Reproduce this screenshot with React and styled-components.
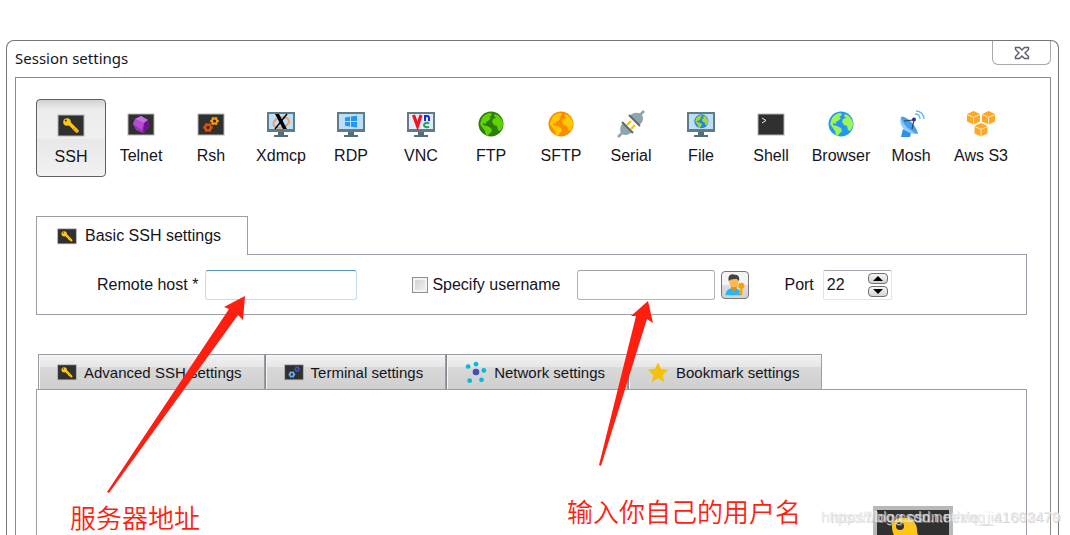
import React from 'react'
import styled, { createGlobalStyle } from 'styled-components'

const line = '#9c9ca6'

const GlobalStyle = createGlobalStyle`
  * {
    box-sizing: border-box;
  }
  body {
    margin: 0;
    background-color: #ffffff;
    color: #14141c;
    font-family: 'Liberation Sans', Arial, sans-serif;
    font-size: 16px;
  }
  button,
  input {
    font: inherit;
    color: inherit;
  }
  svg {
    display: block;
    flex: none;
  }
`

const Page = styled.div`
  position: relative;
  height: 100vh;
  overflow: hidden;
  display: flex;
  flex-direction: column;
  padding: 40px 11px 0 6px;
`

const Window = styled.main`
  flex: 1;
  display: flex;
  flex-direction: column;
  border: 1px solid #77777a;
  border-bottom: none;
  border-radius: 8px 8px 0 0;
`

const TitleBar = styled.header`
  height: 36px;
  display: flex;
  justify-content: space-between;
  align-items: flex-start;
  padding: 0 7px 0 8px;
`

const Title = styled.h1`
  margin: 0;
  font-family: 'Noto Sans', 'Open Sans', sans-serif;
  font-size: 15px;
  font-weight: 400;
  line-height: 34px;
`

const CloseButton = styled.button`
  width: 59px;
  height: 24px;
  padding: 0;
  display: flex;
  align-items: center;
  justify-content: center;
  background: #ffffff;
  border: 1px solid #a9a9ab;
  border-top: none;
  border-radius: 0 0 6px 6px;
`

const Body = styled.div`
  flex: 1;
  display: flex;
  flex-direction: column;
  margin: 0 7px 0 8px;
  padding: 21px 23px 0 20px;
  border: 1px solid #8b8b8f;
  border-bottom: none;
`

const Toolbar = styled.nav`
  display: grid;
  grid-template-columns: repeat(14, minmax(0, 70px));
  margin-bottom: 39px;
`

const ToolButton = styled.button`
  height: 78px;
  padding: ${(props) => (props.$active ? '11px 0 0' : '10px 0 0')};
  display: flex;
  flex-direction: column;
  align-items: center;
  gap: 8px;
  line-height: 20px;
  white-space: nowrap;
  border-radius: 4px;
  border: 1px solid ${(props) => (props.$active ? '#5f5f62' : 'transparent')};
  background: ${(props) =>
    props.$active
      ? 'linear-gradient(#d2d2d2, #ececec 12%, #f0f0f0 50%, #e8e8e8 52%, #f2f2f2)'
      : 'none'};
`

const BasicTab = styled.h2`
  align-self: flex-start;
  height: 39px;
  margin: 0 0 -1px;
  padding: 0 26px 0 20px;
  display: flex;
  align-items: center;
  gap: 8px;
  font-size: 16px;
  font-weight: 400;
  white-space: nowrap;
  background: #ffffff;
  border: 1px solid ${line};
  border-bottom: none;
  z-index: 1;
`

const BasicPanel = styled.form`
  height: 61px;
  margin-bottom: 39px;
  padding-left: 60px;
  display: flex;
  align-items: center;
  border: 1px solid ${line};
  white-space: nowrap;
`

const Field = styled.div`
  display: flex;
  align-items: center;
  gap: ${(props) => props.$gap}px;
  margin-right: ${(props) => props.$after || 0}px;
`

const TextBox = styled.input`
  width: ${(props) => props.$width}px;
  height: 30px;
  padding: 0 4px;
  background: #ffffff;
  border: 1px solid ${(props) => (props.$focus ? '#c3dcee' : '#b4b4b6')};
  border-top-color: ${(props) => (props.$focus ? '#5a94c4' : '#a2a2a5')};
  border-radius: 3px;
  outline: none;
`

const CheckBox = styled.input`
  appearance: none;
  width: 16px;
  height: 16px;
  margin: 0;
  border: 1px solid #8e8f8f;
  background: linear-gradient(135deg, #c9ccd2, #f4f4f5);
  box-shadow: inset 0 0 0 2px #f4f4f4;
`

const UserButton = styled.button`
  width: 28px;
  height: 28px;
  padding: 0;
  display: flex;
  align-items: center;
  justify-content: center;
  border: 1px solid #77777a;
  border-radius: 4px;
  background: linear-gradient(#f4f4f4 50%, #dddddd 52%, #d2d2d2);
`

const Spinner = styled.div`
  width: 69px;
  height: 30px;
  padding-right: 3px;
  display: flex;
  align-items: center;
  border: 1px solid #dfe3ec;
  border-top-color: #a5a8b0;
  border-radius: 2px;
`

const PortBox = styled.input`
  flex: 1;
  min-width: 0;
  padding: 0 0 0 3px;
  border: none;
  outline: none;
  background: none;
`

const SpinButtons = styled.div`
  display: grid;
  gap: 2px;
`

const SpinButton = styled.button`
  width: 20px;
  height: 11px;
  padding: 0;
  display: flex;
  align-items: center;
  justify-content: center;
  border: 1px solid #707073;
  border-radius: 4px;
  background: linear-gradient(#f6f6f6, #d4d4d4);
`

const TabStrip = styled.div`
  display: flex;
  padding-left: 2px;
`

const Tab = styled.button`
  height: 35px;
  padding: 0 22px 0 18px;
  display: flex;
  align-items: center;
  gap: 7px;
  font-size: 15px;
  white-space: nowrap;
  background: linear-gradient(#f3f3f3, #e6e6e6 35%, #d9d9d9 37%, #cfcfcf);
  border: 1px solid ${line};
  border-bottom: none;
  box-shadow: inset 1px 1px 0 #f7f7f7;
  & + & {
    border-left-color: #85858f;
  }
`

const TabPanel = styled.section`
  flex: 1;
  display: flex;
  justify-content: flex-end;
  align-items: flex-start;
  padding: 116px 73px 0 0;
  border: 1px solid ${line};
  border-bottom: none;
`

const Arrows = styled.svg`
  position: absolute;
  top: 0;
  left: 0;
  pointer-events: none;
`

const Note = styled.p`
  position: absolute;
  left: ${(props) => props.$x}px;
  top: ${(props) => props.$y}px;
  margin: 0;
  color: #ff1e0f;
  font-family: 'Noto Sans CJK SC', sans-serif;
  font-size: 26px;
  font-weight: 350;
  line-height: 32px;
  white-space: nowrap;
`

const Watermark = styled.span`
  position: absolute;
  right: 10px;
  top: 507px;
  color: rgba(236, 236, 236, 0.7);
  text-shadow: 1px 1px 0 rgba(190, 190, 190, 0.4);
  font-size: 15px;
  line-height: 20px;
  white-space: nowrap;
`

const Svg = ({ size = 28, children }) => (
  <svg width={size} height={size} viewBox="0 0 28 28" aria-hidden="true">
    {children}
  </svg>
)

const Tile = () => (
  <rect x="1" y="4" width="26" height="21" fill="#303030" stroke="#b5b5b5" />
)

const Monitor = ({ screen = '#bbdefb' }) => (
  <>
    <path d="M11 22h6v3h4v2H7v-2h4z" fill="#546e7a" />
    <rect x="0" y="2" width="28" height="20" fill="#607d86" />
    <rect x="2" y="4" width="24" height="15" fill={screen} />
  </>
)

const Key = () => (
  <>
    <path
      d="M11 11l9 9"
      stroke="#ffc61a"
      strokeWidth="3.4"
      strokeLinecap="round"
    />
    <path d="M16 19l2-2M18 21l2-2" stroke="#dba200" strokeWidth="1.4" />
    <circle cx="10" cy="11" r="3.8" fill="#ffc61a" />
    <circle cx="8.8" cy="9.6" r="1" fill="#303030" />
  </>
)

const Gear = ({ x, y, r, color }) => (
  <g transform={`translate(${x} ${y})`} stroke={color} fill="none">
    <circle r={r * 0.65} strokeWidth={r * 0.5} />
    {[0, 60, 120].map((a) => (
      <path
        key={a}
        d={`M${-r * 1.1} 0h${r * 0.4}M${r * 0.7} 0h${r * 0.4}`}
        strokeWidth={r * 0.55}
        transform={`rotate(${a})`}
      />
    ))}
  </g>
)

const Globe = ({ sea, land }) => (
  <>
    <circle cx="14" cy="14" r="12.5" fill={sea} />
    <path
      d="M5 8c2-3 5-5 9-5l1 2-3 2 2 1-3 3-2 1 0 2-3-1 0 2 4 1 4 2 1 3-3 3-1 2-2-1-1-4-3-4-2-3z"
      fill={land}
    />
    <path
      d="M18 4c4 1 7 5 8 9 0 3-1 6-3 8l-2-1-1-4-3-1-2-3 1-3 3-1-2-2z"
      fill={land}
    />
  </>
)

const SshIcon = ({ size }) => (
  <Svg size={size}>
    <Tile />
    <Key />
  </Svg>
)

const TelnetIcon = () => (
  <Svg>
    <Tile />
    <path d="M14 6l7 4 1 7-6 6-7-3-3-6 2-5z" fill="#9c35bd" />
    <path d="M14 6l7 4-4 3-9-4z" fill="#c471dd" />
    <path d="M17 13l4-3 1 7-6 6z" fill="#6d1295" />
    <path d="M8 9l9 4-2 7-9-6z" fill="#b44cd0" />
  </Svg>
)

const RshIcon = () => (
  <Svg>
    <Tile />
    <Gear x={11} y={17.5} r={4.3} color="#e65100" />
    <Gear x={17.5} y={11} r={3.9} color="#f39c12" />
  </Svg>
)

const TerminalIcon = ({ size }) => (
  <Svg size={size}>
    <Tile />
    <Gear x={11} y={17.5} r={4.3} color="#64b5f6" />
    <Gear x={18.5} y={10} r={3.6} color="#4a55c4" />
  </Svg>
)

const XdmcpIcon = () => (
  <Svg>
    <Monitor />
    <ellipse
      cx="14"
      cy="12.5"
      rx="8"
      ry="5"
      fill="none"
      stroke="#f09a5c"
      strokeWidth="1.8"
      transform="rotate(-15 14 12)"
    />
    <path d="M8 4h4l8 15h-4z" fill="#000000" />
    <path d="M20 4L8 19" stroke="#000000" strokeWidth="1.4" />
  </Svg>
)

const RdpIcon = () => (
  <Svg>
    <Monitor />
    <path
      d="M8 7.4l5-.7V11H8zM14 6.5l6-.8V11h-6zM8 12h5v4.5l-5-.7zM14 12h6v5.5l-6-.8z"
      fill="#2196f3"
    />
  </Svg>
)

const VncIcon = () => (
  <Svg>
    <Monitor screen="#e3ecfa" />
    <path
      d="M6.5 5L10.5 16L14 5"
      fill="none"
      stroke="#f0141e"
      strokeWidth="3.2"
    />
    <path
      d="M18 11V5M18 7c2-2 4-1 4 1v3"
      fill="none"
      stroke="#1c28d8"
      strokeWidth="2"
    />
    <path
      d="M22 13.5c-2-1.5-5-.5-5 1.5s3 3 5 1.5"
      fill="none"
      stroke="#18a84c"
      strokeWidth="2"
    />
  </Svg>
)

const SerialIcon = () => (
  <Svg>
    <path d="M1 27l5-5M22 6l5-5" stroke="#90a4ae" strokeWidth="2.6" />
    <path d="M10 15l4-4M14 19l4-4" stroke="#ffc107" strokeWidth="2.4" />
    <path d="M6 13l9 9c-3 3-7 4-10 2-3-3-2-8 1-11z" fill="#90a4ae" />
    <path d="M13 6l9 9c4-2 5-7 3-10-3-3-9-3-12 1z" fill="#90a4ae" />
    <path d="M5 12l11 11M12 5l11 11" stroke="#546e7a" strokeWidth="2" />
  </Svg>
)

const FileIcon = () => (
  <Svg>
    <Monitor />
    <g transform="translate(6.5 3.5) scale(.56)">
      <Globe sea="#1e88e5" land="#a8d639" />
    </g>
  </Svg>
)

const ShellIcon = () => (
  <Svg>
    <Tile />
    <path d="M5 8l4 2.5-4 2.5" fill="none" stroke="#e8e8e8" />
  </Svg>
)

const FtpIcon = () => (
  <Svg>
    <Globe sea="#2e7d0a" land="#5fd302" />
  </Svg>
)

const SftpIcon = () => (
  <Svg>
    <Globe sea="#ff8a00" land="#ffc800" />
  </Svg>
)

const BrowserIcon = () => (
  <Svg>
    <Globe sea="#2196f3" land="#9cf455" />
  </Svg>
)

const MoshIcon = () => (
  <Svg>
    <path d="M6 19l8 4-1 4H4z" fill="#2f8ff0" />
    <path d="M4 7C1 14 8 25 21 24z" fill="#90caf9" />
    <path d="M4 7c5-2 16 9 17 17C14 22 5 14 4 7z" fill="#42a0f4" />
    <path d="M7 11l10-1-2 9" fill="none" stroke="#37474f" strokeWidth="1.2" />
    <circle cx="17" cy="9.5" r="2" fill="#283593" />
    <path
      d="M18 4c3 0 5 2 5 5M19 1c5 0 8 4 8 8"
      fill="none"
      stroke="#64b5f6"
      strokeWidth="1.3"
    />
  </Svg>
)

const Cube = ({ x, y }) => (
  <g transform={`translate(${x} ${y})`}>
    <path d="M6.5 0L13 3v7.5l-6.5 3L0 10.5V3z" fill="#ffa726" />
    <path
      d="M0 3.5l6.5 2.8L13 3.5M6.5 6.3v7"
      fill="none"
      stroke="#ffe4b8"
    />
  </g>
)

const AwsIcon = () => (
  <Svg>
    <Cube x={0} y={1} />
    <Cube x={15} y={1} />
    <Cube x={7.5} y={13} />
  </Svg>
)

const NetworkIcon = () => (
  <Svg size={22}>
    <circle cx="14" cy="14" r="4.2" fill="#3f51b5" />
    {[
      [14, 4],
      [4, 7],
      [24, 12],
      [21, 24],
      [6, 25],
    ].map(([x, y]) => (
      <circle key={x} cx={x} cy={y} r="3" fill="#00bcd4" />
    ))}
  </Svg>
)

const StarIcon = () => (
  <Svg size={22}>
    <path
      d="M14 2l4 8 9 1-7 7 2 9-8-5-8 5 2-9-7-7 9-1z"
      fill="#f4c20d"
    />
  </Svg>
)

const UserIcon = () => (
  <Svg size={22}>
    <path d="M2 27c0-7 5-9 10-9s10 2 10 9z" fill="#29b6f6" />
    <path d="M9 15h7v4l-3 3-4-3z" fill="#f08c00" />
    <ellipse cx="12.5" cy="10" rx="6" ry="7" fill="#ffb74d" />
    <path d="M6 9C4 1 10-1 14 1c5 0 6 4 5 8l-3-3-7 1z" fill="#424242" />
    <circle cx="22" cy="15" r="4" fill="#ffa000" />
    <path d="M22 17v10M22 24h-3" stroke="#ffa000" strokeWidth="2.6" />
  </Svg>
)

const BigKey = () => (
  <svg width="80" height="64" viewBox="0 0 80 64" aria-hidden="true">
    <rect width="80" height="64" fill="#b8b8b8" />
    <rect x="4" y="4" width="72" height="56" fill="#303030" />
    <path d="M34 28l24 26" stroke="#ffc61a" strokeWidth="11" />
    <path
      d="M19 20c0-10 20-12 24-1 2 5 0 8 3 11L32 42l-7-8c-4-3-6-8-6-14z"
      fill="#ffc61a"
    />
    <circle cx="27" cy="20" r="4" fill="#303030" />
  </svg>
)

const sessions = [
  { name: 'SSH', Icon: SshIcon },
  { name: 'Telnet', Icon: TelnetIcon },
  { name: 'Rsh', Icon: RshIcon },
  { name: 'Xdmcp', Icon: XdmcpIcon },
  { name: 'RDP', Icon: RdpIcon },
  { name: 'VNC', Icon: VncIcon },
  { name: 'FTP', Icon: FtpIcon },
  { name: 'SFTP', Icon: SftpIcon },
  { name: 'Serial', Icon: SerialIcon },
  { name: 'File', Icon: FileIcon },
  { name: 'Shell', Icon: ShellIcon },
  { name: 'Browser', Icon: BrowserIcon },
  { name: 'Mosh', Icon: MoshIcon },
  { name: 'Aws S3', Icon: AwsIcon },
]

const App = () => {
  const [session, setSession] = React.useState('SSH')
  const [port, setPort] = React.useState(22)

  return (
    <Page>
      <GlobalStyle />
      <Window>
        <TitleBar>
          <Title>Session settings</Title>
          <CloseButton aria-label="Close">
            <svg width="16" height="14" viewBox="0 0 16 14">
              <path
                d="M1.5 1.5h4L8 4l2.5-2.5h4v2L11 7l3.5 3.5v2h-4L8 10l-2.5 2.5h-4v-2L5 7 1.5 3.5z"
                fill="#ffffff"
                stroke="#5c5f6e"
                strokeWidth="1.4"
              />
            </svg>
          </CloseButton>
        </TitleBar>
        <Body>
          <Toolbar>
            {sessions.map(({ name, Icon }) => (
              <ToolButton
                key={name}
                $active={name === session}
                onClick={() => setSession(name)}
              >
                <Icon />
                {name}
              </ToolButton>
            ))}
          </Toolbar>

          <BasicTab>
            <SshIcon size={20} />
            Basic SSH settings
          </BasicTab>
          <BasicPanel onSubmit={(e) => e.preventDefault()}>
            <Field $gap={7} $after={55}>
              <label htmlFor="host">Remote host *</label>
              <TextBox id="host" $width={152} $focus />
            </Field>
            <Field $gap={4} $after={17}>
              <CheckBox id="specify" type="checkbox" />
              <label htmlFor="specify">Specify username</label>
            </Field>
            <Field $gap={6} $after={35}>
              <TextBox aria-label="Username" $width={138} />
              <UserButton type="button" aria-label="Manage users">
                <UserIcon />
              </UserButton>
            </Field>
            <Field $gap={9}>
              <label htmlFor="port">Port</label>
              <Spinner>
                <PortBox
                  id="port"
                  value={port}
                  onChange={(e) => setPort(Number(e.target.value) || 0)}
                />
                <SpinButtons>
                  <SpinButton
                    type="button"
                    aria-label="Increase port"
                    onClick={() => setPort(port + 1)}
                  >
                    <svg width="10" height="5" viewBox="0 0 10 5">
                      <path d="M0 5l5-5 5 5z" />
                    </svg>
                  </SpinButton>
                  <SpinButton
                    type="button"
                    aria-label="Decrease port"
                    onClick={() => setPort(port - 1)}
                  >
                    <svg width="10" height="5" viewBox="0 0 10 5">
                      <path d="M0 0l5 5 5-5z" />
                    </svg>
                  </SpinButton>
                </SpinButtons>
              </Spinner>
            </Field>
          </BasicPanel>

          <TabStrip>
            <Tab>
              <SshIcon size={20} />
              Advanced SSH settings
            </Tab>
            <Tab>
              <TerminalIcon size={20} />
              Terminal settings
            </Tab>
            <Tab>
              <NetworkIcon />
              Network settings
            </Tab>
            <Tab>
              <StarIcon />
              Bookmark settings
            </Tab>
          </TabStrip>
          <TabPanel>
            <BigKey />
          </TabPanel>
        </Body>
      </Window>

      <Arrows width="1070" height="535" viewBox="0 0 1070 535">
        <path
          d="M107 492L229 309l-5-2 21-11-2 24-5-5L109 493z"
          fill="#ff1e0f"
        />
        <path
          d="M599 465L636 316h-5l17-15 5 22-6-4L601 466z"
          fill="#ff1e0f"
        />
      </Arrows>
      <Note $x={70} $y={501}>
        服务器地址
      </Note>
      <Note $x={567} $y={495}>
        输入你自己的用户名
      </Note>
      <Watermark>https://blog.csdn.net/xie_jia1602470</Watermark>
      <Watermark>https://blog.csdn.net/qq_41693479</Watermark>
    </Page>
  )
}

export default App
